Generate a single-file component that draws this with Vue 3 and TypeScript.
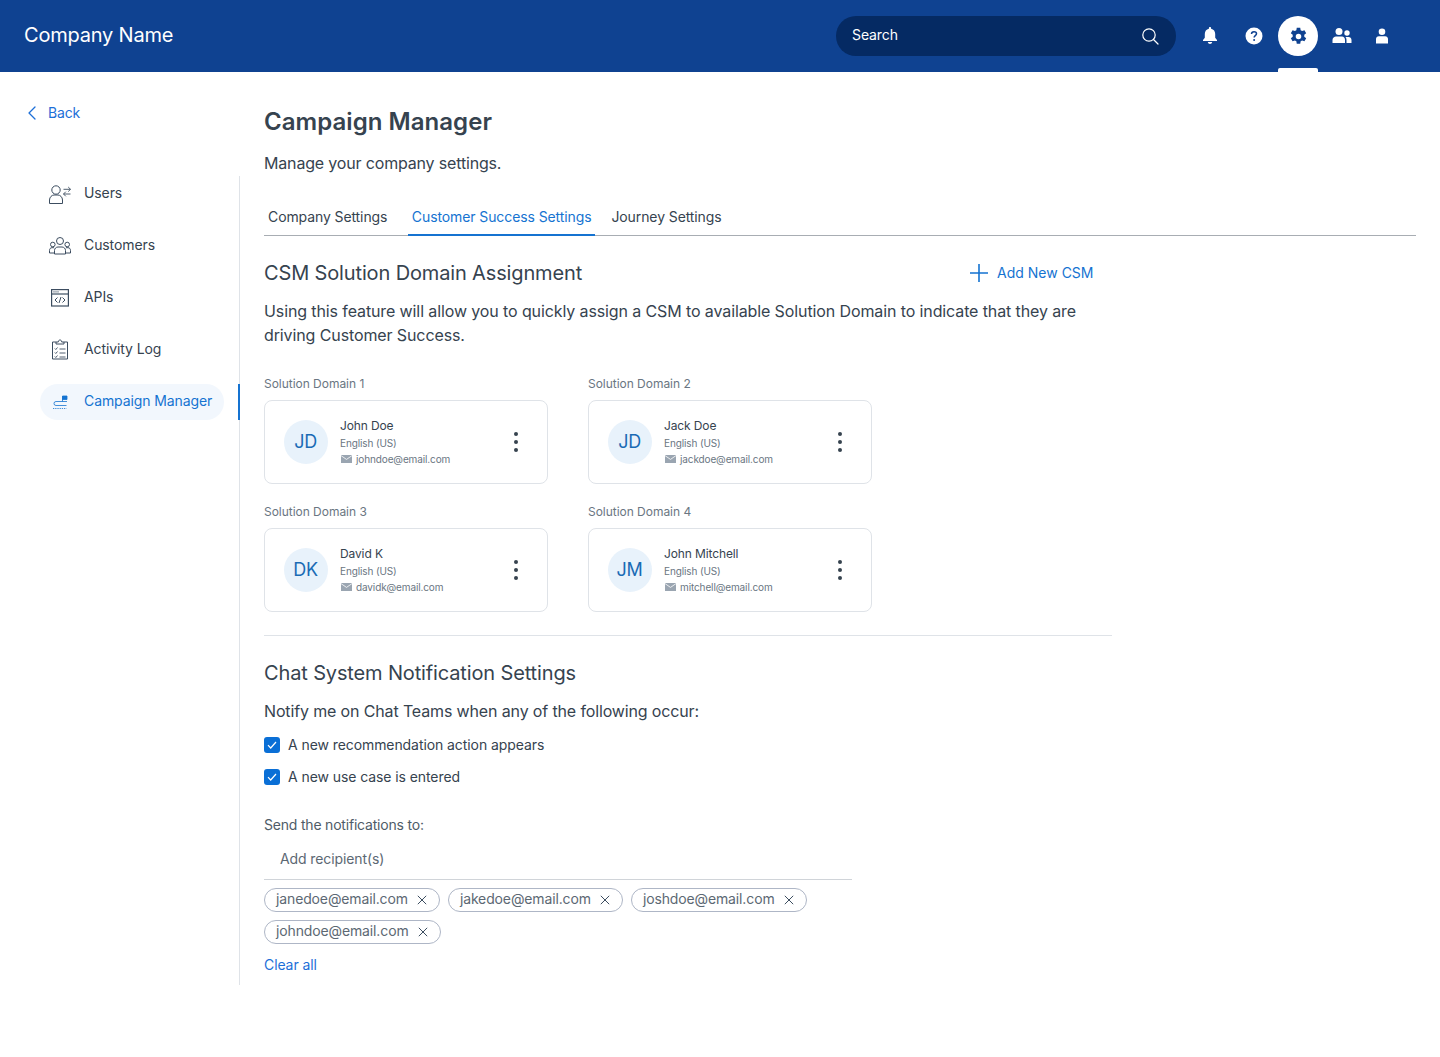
<template>
  <div class="page">
    <header class="topbar">
      <div class="brand">Company Name</div>
      <div class="search">
        <span>Search</span>
        <svg width="18" height="18" viewBox="0 0 18 18" fill="none" stroke="#fff" stroke-width="1.2">
          <circle cx="8" cy="8" r="6.2" />
          <path d="M12.5 12.5 17 17" stroke-linecap="round" />
        </svg>
      </div>
      <div class="actions">
        <button class="action action--bell" aria-label="Notifications">
          <svg width="16" height="18" viewBox="0 0 16 18" fill="#fff">
            <path d="M8 0c.7 0 1.1.5 1.1 1.2v.5C11.700 2.200 13.200 4.300 13.200 7v3.800L15 13v1H1v-1l1.800-2.200V7c0-2.700 1.500-4.800 4.100-5.300v-.5C6.900.5 7.300 0 8 0Z" />
            <path d="M5.800 15h4.400C10 16.300 9.100 17 8 17s-2-.7-2.200-2Z" />
          </svg>
        </button>
        <button class="action action--help" aria-label="Help">
          <svg width="18" height="18" viewBox="0 0 18 18">
            <circle cx="9" cy="9" r="8.500" fill="#fff" />
            <path d="M6.500 7c0-1.500 1.100-2.300 2.500-2.300s2.500.8 2.500 2.100c0 1.900-2.400 1.900-2.400 3.800" fill="none" stroke="#0f4291" stroke-width="1.500" />
            <circle cx="9.100" cy="13" r="1" fill="#0f4291" />
          </svg>
        </button>
        <button class="action action--settings" aria-label="Settings">
          <svg width="19" height="19" viewBox="0 0 24 24" fill="#0f4291">
            <path fill-rule="evenodd" d="M14.200 1l.5 3 1.900 1.100 2.900-1.100 2.200 3.800-2.400 1.900v2.600l2.400 1.900-2.200 3.800-2.900-1.100-1.900 1.100-.5 3H9.800l-.5-3-1.900-1.100-2.900 1.100-2.200-3.800 2.400-1.900V9.700L2.300 7.800 4.500 4l2.900 1.100L9.300 4l.5-3h4.400ZM12 8.500a3.500 3.500 0 1 0 0 7 3.500 3.500 0 0 0 0-7Z" />
          </svg>
        </button>
        <button class="action action--team" aria-label="Team">
          <svg width="20" height="18" viewBox="0 0 20 18" fill="#fff">
            <circle cx="7" cy="4.500" r="3.500" />
            <path d="M.5 16v-3c0-2.200 1.800-3.500 3.500-3.500h6c1.700 0 3 1.300 3 3.500v3H.5Z" />
            <circle cx="15" cy="6" r="2.700" />
            <path d="M14.500 16v-3.200c0-1.200-.4-2.100-1-2.800h3c1.700 0 3 1.200 3 3v3h-5Z" />
          </svg>
        </button>
        <button class="action action--user" aria-label="Profile">
          <svg width="12" height="16" viewBox="0 0 12 16" fill="#fff">
            <circle cx="6" cy="3.800" r="3.300" />
            <path d="M0 15.500V11c0-1.600 1.200-2.800 2.800-2.800h6.400C10.800 8.200 12 9.400 12 11v4.500H0Z" />
          </svg>
        </button>
      </div>
    </header>

    <div class="body">
      <aside class="sidebar">
        <a class="back">
          <svg width="10" height="14" viewBox="0 0 10 14" fill="none" stroke="#1d6fd8" stroke-width="1.300">
            <path d="M8 1 2 7l6 6" stroke-linecap="round" stroke-linejoin="round" />
          </svg>
          <span>Back</span>
        </a>
        <nav class="nav">
          <a class="nav-item">
            <svg width="24" height="20" viewBox="0 0 24 20" fill="none" stroke="#3c4d60" stroke-width="1">
              <circle cx="8" cy="6" r="4.200" />
              <path d="M1.500 19.500v-3.500c0-3 2.500-5 4.500-5h4c2 0 4.500 2 4.500 5v3.500h-13Z" />
              <path d="M15.500 5.300h7m-2.300-2.300 2.300 2.300-2.300 2.300M22.500 10h-7m2.300-2.300L15.500 10l2.300 2.300" stroke-width=".9" />
            </svg>
            <span>Users</span>
          </a>
          <a class="nav-item">
            <svg width="24" height="20" viewBox="0 0 24 20" fill="none" stroke="#3c4d60" stroke-width="1">
              <circle cx="12" cy="5" r="3.500" />
              <circle cx="4.800" cy="8.500" r="2.300" />
              <circle cx="19.200" cy="8.500" r="2.300" />
              <path d="M6.500 18v-3.500c0-2 1.500-3.500 3.500-3.500h4c2 0 3.500 1.500 3.500 3.500V18h-11Z" />
              <path d="M6.500 17H1.500v-2.500c0-1.700 1-2.800 2.500-2.800h2M17.500 17h5v-2.500c0-1.700-1-2.800-2.500-2.800h-2" />
            </svg>
            <span>Customers</span>
          </a>
          <a class="nav-item">
            <svg width="24" height="20" viewBox="0 0 24 20" fill="none" stroke="#3c4d60" stroke-width="1.200">
              <rect x="3.600" y="1.600" width="16.800" height="16.400" />
              <path d="M3.500 6h17" />
              <path d="M5.500 3.800h1M7.500 3.800h1M9.500 3.800h1" />
              <path d="M9.500 9.500 7 12l2.500 2.500M14.500 9.500 17 12l-2.500 2.500M13 9 11 15" stroke-width="1" />
            </svg>
            <span>APIs</span>
          </a>
          <a class="nav-item">
            <svg width="24" height="22" viewBox="0 0 24 22" fill="none" stroke="#3c4d60" stroke-width="1">
              <path d="M8 3h-3.500v17h15V3H16" />
              <path d="M8 5V3h2.300c0-2.700 3.400-2.700 3.400 0H16v2H8Z" />
              <path d="M6.800 9.500l1 1 1.700-2M6.800 13.500l1 1 1.700-2M6.800 17.500l1 1 1.700-2M11.500 10h6M11.500 14h6M11.500 18h6" stroke-width=".9" />
            </svg>
            <span>Activity Log</span>
          </a>
          <a class="nav-item nav-item--active">
            <svg width="24" height="20" viewBox="0 0 24 20" fill="none" stroke="#1573d1" stroke-width=".8">
              <path d="M19 9.500H8a2 2 0 0 0 0 4h10.500" />
              <path d="M5 16.500h13.500" stroke-dasharray="1.300 .9" />
              <path d="M14.500 4v5.500" />
              <path d="M14.500 4H19v3.500h-4.500z" fill="#1573d1" />
            </svg>
            <span>Campaign Manager</span>
          </a>
        </nav>
      </aside>

      <main class="main">
        <h1 class="title">Campaign Manager</h1>
        <p class="subtitle">Manage your company settings.</p>

        <div class="tabs">
          <a v-for="tab in tabs" :key="tab" class="tab" :class="{ 'tab--active': tab === activeTab }">{{ tab }}</a>
        </div>

        <section class="section">
          <div class="section-head">
            <h2>CSM Solution Domain Assignment</h2>
            <a class="add-link">
              <svg width="18" height="18" viewBox="0 0 18 18" stroke="#1573d1" stroke-width="1.600">
                <path d="M9 0v18M0 9h18" />
              </svg>
              <span>Add New CSM</span>
            </a>
          </div>
          <p class="intro">
            Using this feature will allow you to quickly assign a CSM to available Solution Domain to indicate that they are driving Customer Success.
          </p>

          <div class="domains">
            <div v-for="d in domains" :key="d.label" class="domain">
              <div class="domain-label">{{ d.label }}</div>
              <div class="card">
                <div class="avatar">{{ d.initials }}</div>
                <div class="card-info">
                  <div class="card-name">{{ d.name }}</div>
                  <div class="card-lang">English (US)</div>
                  <div class="card-mail">
                    <svg width="11" height="8" viewBox="0 0 11 8">
                      <rect width="11" height="8" fill="#9aa5b1" />
                      <path d="M0 .6 5.500 4.400 11 .6" fill="none" stroke="#fff" stroke-width=".8" />
                    </svg>
                    {{ d.email }}
                  </div>
                </div>
                <div class="kebab"><i /><i /><i /></div>
              </div>
            </div>
          </div>
        </section>

        <section class="chat">
          <h2>Chat System Notification Settings</h2>
          <p class="notify">Notify me on Chat Teams when any of the following occur:</p>
          <label v-for="c in checks" :key="c" class="check">
            <span class="box">
              <svg width="10" height="8" viewBox="0 0 10 8" fill="none" stroke="#fff" stroke-width="1.200">
                <path d="M1 4.200 3.700 7 9 1" />
              </svg>
            </span>
            <span class="check-text">{{ c }}</span>
          </label>

          <div class="send-label">Send the notifications to:</div>
          <div class="recipient">Add recipient(s)</div>
          <div class="chips">
            <span v-for="r in recipients" :key="r" class="chip">
              <span class="chip-text">{{ r }}</span>
              <svg width="10" height="10" viewBox="0 0 10 10" stroke="#3c4d60" stroke-width="1">
                <path d="M.8.800l8.400 8.400M9.200.800.8 9.200" />
              </svg>
            </span>
          </div>
          <a class="clear">Clear all</a>
        </section>
      </main>
    </div>
  </div>
</template>

<script setup lang="ts">
interface Domain {
  label: string
  initials: string
  name: string
  email: string
}

const tabs = ['Company Settings', 'Customer Success Settings', 'Journey Settings']
const activeTab = 'Customer Success Settings'

const domains: Domain[] = [
  { label: 'Solution Domain 1', initials: 'JD', name: 'John Doe', email: 'johndoe@email.com' },
  { label: 'Solution Domain 2', initials: 'JD', name: 'Jack Doe', email: 'jackdoe@email.com' },
  { label: 'Solution Domain 3', initials: 'DK', name: 'David K', email: 'davidk@email.com' },
  { label: 'Solution Domain 4', initials: 'JM', name: 'John Mitchell', email: 'mitchell@email.com' },
]

const checks = ['A new recommendation action appears', 'A new use case is entered']

const recipients = ['janedoe@email.com', 'jakedoe@email.com', 'joshdoe@email.com', 'johndoe@email.com']
</script>

<style>
body {
  background: #fff;
}
</style>

<style scoped>
.page {
  width: 1440px;
  min-height: 1057px;
  font-family: Inter, "Liberation Sans", sans-serif;
  color: #36434f;
  letter-spacing: -0.1px;
}

/* header */
.topbar {
  height: 72px;
  background: #0f4291;
  display: flex;
  align-items: center;
  padding: 0 24px;
  box-sizing: border-box;
}

.brand {
  font-size: 20px;
  letter-spacing: -0.2px;
  color: #fff;
  flex: 1;
  padding-bottom: 2px;
}

.search {
  width: 340px;
  height: 40px;
  border-radius: 20px;
  background: #052a63;
  color: #fff;
  font-size: 14px;
  display: flex;
  align-items: center;
  justify-content: space-between;
  padding: 0 17px 0 16px;
  box-sizing: border-box;
}

.search span {
  margin-bottom: 3px;
}

.actions {
  display: flex;
  align-items: center;
  margin-left: 14px;
  margin-right: 14px;
}

.action {
  width: 40px;
  height: 40px;
  border: 0;
  padding: 0;
  background: transparent;
  display: flex;
  align-items: center;
  justify-content: center;
}

.action--help,
.action--settings,
.action--team {
  margin-left: 4px;
}

.action--settings {
  border-radius: 50%;
  background: #fff;
  position: relative;
}

.action--settings::after {
  content: "";
  position: absolute;
  left: 0;
  right: 0;
  top: 52px;
  height: 4px;
  background: #fff;
  border-radius: 2px 2px 0 0;
}

/* sidebar */
.body {
  display: flex;
}

.sidebar {
  width: 240px;
  flex-shrink: 0;
  padding-top: 32px;
}

.back {
  display: flex;
  align-items: center;
  gap: 11px;
  padding-left: 27px;
  height: 18px;
  font-size: 14px;
  letter-spacing: -0.15px;
  color: #1d6fd8;
}

.back span {
  margin-bottom: 2px;
}

.nav {
  margin-top: 54px;
  height: 809px;
  box-sizing: border-box;
  border-right: 1px solid #dfe3e8;
  display: flex;
  flex-direction: column;
  gap: 16px;
}

.nav-item {
  height: 36px;
  width: 184px;
  margin-left: 40px;
  padding-left: 8px;
  box-sizing: border-box;
  border-radius: 18px;
  display: flex;
  align-items: center;
  gap: 12px;
  font-size: 14px;
  color: #36434f;
  position: relative;
}

.nav-item svg {
  flex-shrink: 0;
}

.nav-item span {
  margin-bottom: 4px;
}

.nav-item--active {
  background: #f2f7fd;
  color: #1573d1;
}

.nav-item--active::after {
  content: "";
  position: absolute;
  left: 198px;
  top: 0;
  width: 2px;
  height: 36px;
  background: #1573d1;
}

/* main */
.main {
  flex: 1;
  padding: 0 24px;
  min-width: 0;
}

.title {
  margin: 34px 0 0;
  font-size: 24px;
  line-height: 32px;
  font-weight: 600;
  letter-spacing: 0.05px;
  color: #36434f;
}

.subtitle {
  margin: 13px 0 0;
  font-size: 16px;
  line-height: 24px;
  letter-spacing: -0.17px;
}

.tabs {
  margin-top: 20px;
  height: 41px;
  box-sizing: border-box;
  display: flex;
  border-bottom: 1px solid #a8adb3;
}

.tab {
  font-size: 14px;
  line-height: 20px;
  padding: 12px 4px 0;
  height: 41px;
  box-sizing: border-box;
  margin-right: 16.5px;
}

.tab--active {
  color: #1573d1;
  border-bottom: 2px solid #1573d1;
  margin-right: 12px;
}

.section {
  width: 848px;
  padding-bottom: 23px;
  border-bottom: 1px solid #dfe3e8;
}

.section-head {
  margin-top: 23px;
  display: flex;
  align-items: center;
  justify-content: space-between;
  padding-right: 18.5px;
  height: 28px;
}

h2 {
  margin: 0;
  font-size: 20px;
  line-height: 28px;
  font-weight: 400;
  letter-spacing: -0.14px;
  color: #36434f;
}

.add-link {
  display: flex;
  align-items: center;
  gap: 9px;
  font-size: 14px;
  letter-spacing: 0;
  color: #1573d1;
}

.add-link span {
  margin-bottom: 2px;
}

.intro {
  margin: 12px 0 0;
  font-size: 16px;
  line-height: 24px;
  letter-spacing: -0.11px;
}

.domains {
  margin-top: 29px;
  display: grid;
  grid-template-columns: 284px 284px;
  column-gap: 40px;
  row-gap: 20px;
}

.domain-label {
  font-size: 12px;
  line-height: 16px;
  letter-spacing: -0.03px;
  color: #6a7682;
  margin-bottom: 8px;
}

.card {
  height: 84px;
  box-sizing: border-box;
  border: 1px solid #dfe3e8;
  border-radius: 8px;
  padding: 0 29px 0 19px;
  display: flex;
  align-items: center;
}

.avatar {
  width: 44px;
  height: 44px;
  border-radius: 50%;
  background: #e8f2fb;
  color: #1a6bb5;
  font-size: 18px;
  letter-spacing: -0.3px;
  padding: 0 1px 1px 0;
  box-sizing: border-box;
  display: flex;
  align-items: center;
  justify-content: center;
  flex-shrink: 0;
}

.card-info {
  margin-left: 12px;
  flex: 1;
  padding: 1px 0;
}

.card-name {
  font-size: 12px;
  line-height: 16px;
  letter-spacing: -0.12px;
  color: #36434f;
}

.card-lang {
  margin-top: 1px;
  font-size: 10px;
  line-height: 16px;
  letter-spacing: -0.12px;
  color: #6a7682;
}

.card-mail {
  display: flex;
  align-items: center;
  gap: 4px;
  padding-left: 1px;
  font-size: 10px;
  line-height: 16px;
  letter-spacing: -0.12px;
  color: #6a7682;
}

.kebab {
  display: flex;
  flex-direction: column;
  gap: 4px;
}

.kebab i {
  display: block;
  width: 4px;
  height: 4px;
  border-radius: 50%;
  background: #36434f;
}

.chat {
  width: 848px;
}

.chat h2 {
  margin-top: 23px;
}

.notify {
  margin: 12px 0 0;
  font-size: 16px;
  line-height: 24px;
  letter-spacing: -0.14px;
}

.check {
  display: flex;
  align-items: center;
  gap: 8px;
  height: 32px;
  font-size: 14px;
}

.notify + .check {
  margin-top: 6px;
}

.check-text {
  margin-bottom: 2px;
  letter-spacing: -0.08px;
}

.box {
  width: 16px;
  height: 16px;
  border-radius: 3px;
  background: #0a6fd6;
  display: flex;
  align-items: center;
  justify-content: center;
}

.send-label {
  margin-top: 22px;
  font-size: 14px;
  line-height: 20px;
  letter-spacing: -0.2px;
  color: #4f5c68;
}

.recipient {
  width: 588px;
  height: 45px;
  margin-top: 0;
  padding: 3px 0 0 16px;
  box-sizing: border-box;
  display: flex;
  align-items: center;
  border-bottom: 1px solid #d0d4d9;
  font-size: 14px;
  color: #5c6873;
}

.chips {
  margin-top: 8px;
  display: flex;
  flex-wrap: wrap;
  gap: 8px;
  width: 588px;
}

.chip {
  height: 24px;
  box-sizing: border-box;
  border: 1px solid #aeb6c6;
  border-radius: 12px;
  padding: 0 12px 0 11px;
  display: flex;
  align-items: center;
  gap: 9px;
  font-size: 14px;
  letter-spacing: -0.13px;
  color: #5c6873;
}

.chip-text {
  margin-bottom: 3px;
}

.clear {
  display: block;
  margin-top: 11px;
  font-size: 14px;
  line-height: 20px;
  color: #1d6fd8;
}
</style>
